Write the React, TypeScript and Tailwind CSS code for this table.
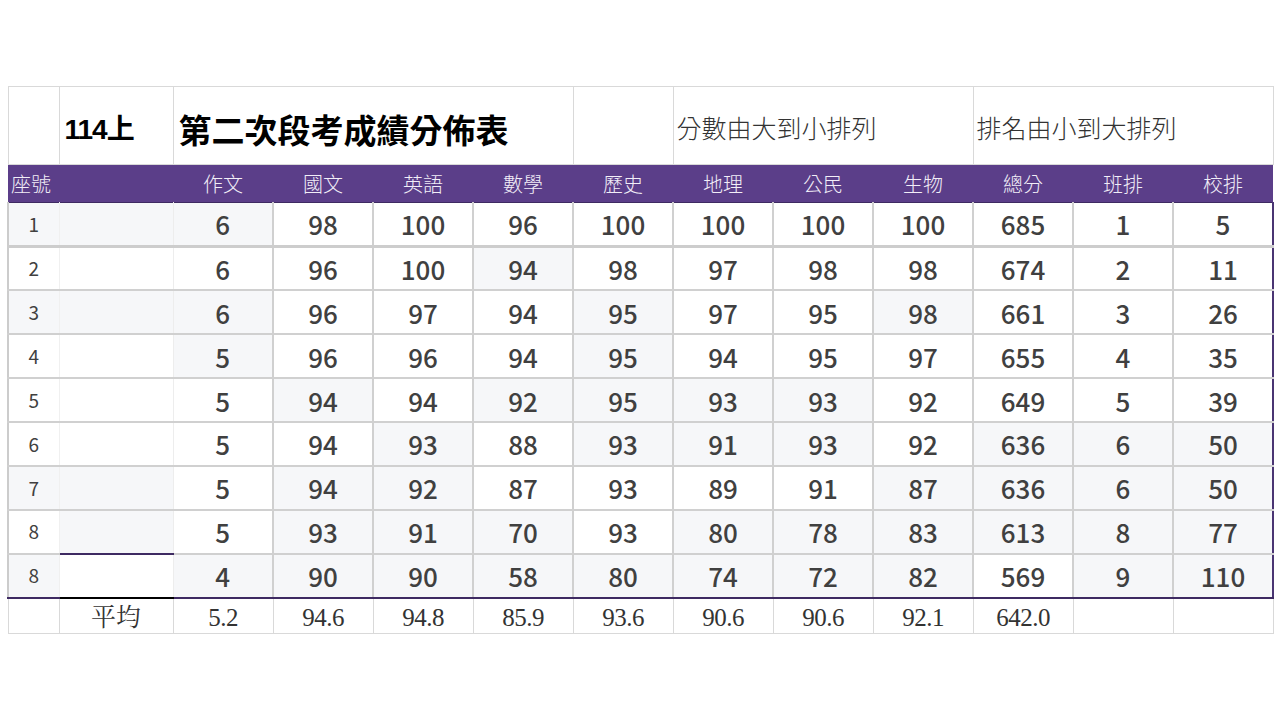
const subjects = ["作文", "國文", "英語", "數學", "歷史", "地理", "公民", "生物", "總分", "班排", "校排"];

const rows: { seat: string; scores: number[]; shade: string }[] = [
  { seat: "1", scores: [6, 98, 100, 96, 100, 100, 100, 100, 685, 1, 5], shade: "gggwwwwwwwwww" },
  { seat: "2", scores: [6, 96, 100, 94, 98, 97, 98, 98, 674, 2, 11], shade: "wwwwwgwwwwwww" },
  { seat: "3", scores: [6, 96, 97, 94, 95, 97, 95, 98, 661, 3, 26], shade: "gggwwwgwwgwww" },
  { seat: "4", scores: [5, 96, 96, 94, 95, 94, 95, 97, 655, 4, 35], shade: "wwgwwwgwwwwww" },
  { seat: "5", scores: [5, 94, 94, 92, 95, 93, 93, 92, 649, 5, 39], shade: "wwwgwggggwwww" },
  { seat: "6", scores: [5, 94, 93, 88, 93, 91, 93, 92, 636, 6, 50], shade: "wwwwgwgggwggg" },
  { seat: "7", scores: [5, 94, 92, 87, 93, 89, 91, 87, 636, 6, 50], shade: "ggwggwwwwgggg" },
  { seat: "8", scores: [5, 93, 91, 70, 93, 80, 78, 83, 613, 8, 77], shade: "wgwgggwgggggg" },
  { seat: "8", scores: [4, 90, 90, 58, 80, 74, 72, 82, 569, 9, 110], shade: "gwggggggggwgg" },
];

const averages = ["5.2", "94.6", "94.8", "85.9", "93.6", "90.6", "90.6", "92.1", "642.0", "", ""];

const bg = (c: string) => (c === "g" ? "bg-[#f6f7f9]" : "bg-white");

const App = () => {
  return (
    <div className="w-[1280px] h-[720px] bg-white font-['Noto_Sans_CJK_TC','Noto_Sans_CJK_SC',sans-serif] text-[#404040]">
      <table className="table-fixed border-collapse w-[1264px] ml-[7px] relative top-[86px]">
        <colgroup>
          <col className="w-[51px]" />
          <col className="w-[114px]" />
          {subjects.map((s) => (
            <col key={s} className="w-[100px]" />
          ))}
        </colgroup>
        <tbody>
          {/* title row */}
          <tr className="h-[78px]">
            <td className="border border-[#d9d9d9]"></td>
            <td className="border border-[#d9d9d9] pl-[5px] pt-[8px] align-middle text-[28px] font-bold text-black font-['Liberation_Sans','Noto_Sans_CJK_TC',sans-serif] tracking-[-1px]">
              114上
            </td>
            <td colSpan={4} className="border border-[#d9d9d9] pl-[5px] pt-[8px] align-middle text-[33px] font-bold text-black whitespace-nowrap">
              第二次段考成績分佈表
            </td>
            <td className="border border-[#d9d9d9]"></td>
            <td colSpan={3} className="border border-[#d9d9d9] pl-[3px] pt-[4px] align-middle text-[25px] font-light text-[#333333] whitespace-nowrap">
              分數由大到小排列
            </td>
            <td colSpan={3} className="border border-[#d9d9d9] pl-[3px] pt-[4px] align-middle text-[25px] font-light text-[#333333] whitespace-nowrap">
              排名由小到大排列
            </td>
          </tr>

          {/* header */}
          <tr className="h-[38px] bg-[#5b3e89] text-[#f2eef8] text-[20px] font-light border-b border-b-[#3e2a62]">
            <td className="pl-[3px] whitespace-nowrap">座號</td>
            <td></td>
            {subjects.map((s) => (
              <td key={s} className="text-center">
                {s}
              </td>
            ))}
          </tr>

          {/* data */}
          {rows.map((r, i) => {
            const last = i === rows.length - 1;
            const rowB = last
              ? "border-b-2 border-b-[#3e2a62]"
              : i === 0
                ? "border-b-[3px] border-b-[#cdcdcd]"
                : "border-b-2 border-b-[#d0d0d0]";
            return (
              <tr key={i} className="h-[43.9px]">
                <td className={`${bg(r.shade[0])} ${rowB} border-l-2 border-l-[#cccccc] border-r border-r-[#f0f0f0] text-center text-[19px]`}>
                  {r.seat}
                </td>
                <td
                  className={`${bg(r.shade[1])} ${
                    last ? "border-b-2 border-b-black" : i === 7 ? "border-b-2 border-b-[#3e2a62]" : rowB
                  } border-r border-r-[#ededed]`}
                ></td>
                {r.scores.map((v, j) => (
                  <td
                    key={j}
                    className={`${bg(r.shade[j + 2])} ${rowB} ${
                      j === 10 ? "border-r-2 border-r-[#4a3573]" : "border-r-2 border-r-[#d0d0d0]"
                    } text-center text-[26px] font-medium`}
                  >
                    {v}
                  </td>
                ))}
              </tr>
            );
          })}

          {/* averages */}
          <tr className="h-[35px] text-[#333333] font-['Liberation_Serif','Noto_Serif_CJK_TC','Noto_Sans_CJK_TC',serif] text-[25px] leading-[30px]">
            <td className="border border-[#d9d9d9]"></td>
            <td className="border border-[#d9d9d9] text-center p-0 pt-[4px]">平均</td>
            {averages.map((a, j) => (
              <td key={j} className="border border-[#d9d9d9] text-center p-0 pt-[4px] tracking-[-0.5px]">
                {a}
              </td>
            ))}
          </tr>
        </tbody>
      </table>
    </div>
  );
};

export default App;
